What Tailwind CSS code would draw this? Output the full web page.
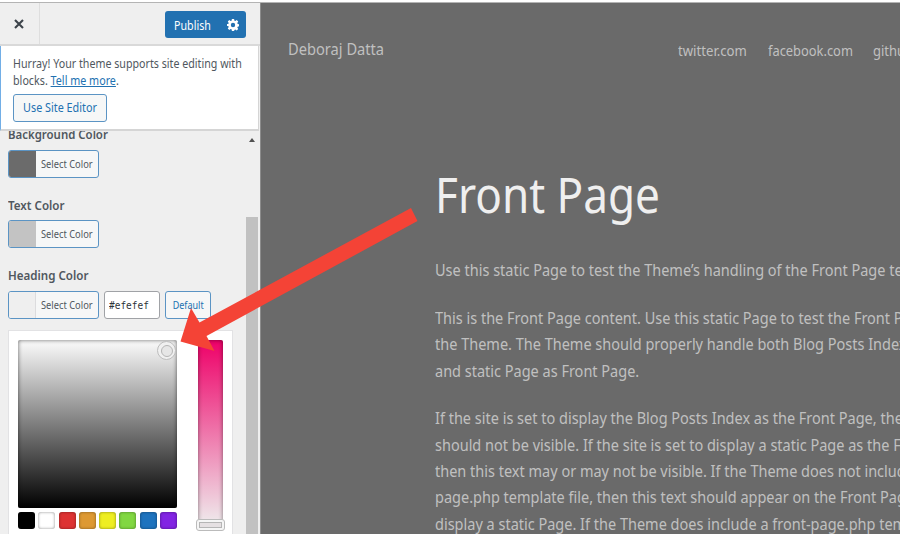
<!DOCTYPE html>
<html lang="en">
<head>
<meta charset="utf-8">
<title>Customize</title>
<script src="https://cdn.jsdelivr.net/npm/@tailwindcss/browser@4"></script>
</head>
<body class="relative flex h-[534px] w-[900px] flex-col overflow-hidden bg-white font-['Noto_Sans',sans-serif]">
<div class="h-[2px] shrink-0 bg-white"></div>
<div class="flex h-[532px] border-t border-[#b4b4b4]">
  <aside class="flex w-[260px] shrink-0 flex-col overflow-hidden bg-[#efefef]">
    <header class="flex h-[43px] shrink-0 items-center border-b-2 border-[#d9d9d9]">
      <button class="flex h-full w-[40px] items-center justify-center border-r border-[#dedede] pr-[2px]">
        <svg class="h-[10px] w-[10px]" viewBox="0 0 10 10" fill="none" stroke="#3c434a" stroke-width="2.1"><path d="M1 1l8 8M9 1l-8 8"/></svg>
      </button>
      <div class="mt-[2px] ml-[125px] flex h-[27px] w-[81px] items-center rounded-[3px] bg-[#2271b1] text-white">
        <span class="w-[54px] pl-[9px] pt-[2px] text-[12px]"><span class="inline-block origin-left scale-x-[.89]">Publish</span></span>
        <svg class="ml-[8px] h-[12px] w-[12px]" viewBox="0 0 22 22"><path fill="#fff" fill-rule="evenodd" d="M9 0h4l.6 3 1.700.7 2.500-1.700 2.800 2.800-1.700 2.500.7 1.700 3 .6v3.800l-3 .6-.7 1.700 1.700 2.500-2.800 2.800-2.500-1.700-1.700.7L13 22H9l-.6-3-1.700-.7L4.200 20l-2.800-2.800 1.700-2.500-.7-1.700-2.400-.1V9.100L2.400 9l.7-1.700L1.400 4.800 4.200 2l2.500 1.700L8.400 3zM11 7a4 4 0 1 0 0 8 4 4 0 0 0 0-8z"/></svg>
      </div>
    </header>
    <section class="flex h-[85px] w-[259px] shrink-0 flex-col items-start border-r border-b-2 border-l border-[#d5d5d5] border-l-[#72aee6] bg-white pt-[10px] pl-[12px] text-[#50575e]">
      <p class="text-[12px] leading-[16.500px] whitespace-nowrap"><span class="block origin-left scale-x-[.89]">Hurray! Your theme supports site editing with</span><span class="block origin-left scale-x-[.895]">blocks. <a class="text-[#2271b1] underline">Tell me more</a>.</span></p>
      <button class="mt-[5px] h-[28px] w-[94px] rounded-[3px] border border-[#5b94c4] bg-[#f6f7f7] text-[12px] whitespace-nowrap text-[#2271b1]"><span class="-mx-2 inline-block scale-x-[.9]">Use Site Editor</span></button>
    </section>
    <div class="flex min-h-0 flex-1 overflow-hidden">
      <div class="w-[246px] pl-[8px] text-[12px] text-[#50575e]">
        <h3 class="-mt-[4px] h-[23px] origin-left scale-x-[.952] leading-[15px] font-semibold">Background Color</h3>
        <button class="flex h-[28px] w-[91px] overflow-hidden rounded-[3px] border border-[#5b94c4] bg-[#f6f7f7] text-[10px] leading-[26px] whitespace-nowrap"><span class="h-full w-[27px] shrink-0 bg-[#6b6b6b]"></span><span class="ml-[5px] origin-left scale-x-[.93]">Select Color</span></button>
        <h3 class="mt-[20px] h-[22px] origin-left scale-x-[.965] leading-[16px] font-semibold">Text Color</h3>
        <button class="flex h-[28px] w-[91px] overflow-hidden rounded-[3px] border border-[#5b94c4] bg-[#f6f7f7] text-[10px] leading-[26px] whitespace-nowrap"><span class="h-full w-[27px] shrink-0 bg-[#c3c3c3]"></span><span class="ml-[5px] origin-left scale-x-[.93]">Select Color</span></button>
        <h3 class="mt-[20px] h-[23px] origin-left scale-x-[.965] leading-[16px] font-semibold">Heading Color</h3>
        <div class="flex">
          <button class="flex h-[28px] w-[91px] overflow-hidden rounded-[3px] border border-[#5b94c4] bg-[#f6f7f7] text-[10px] leading-[26px] whitespace-nowrap"><span class="h-full w-[27px] shrink-0 border-r border-[#dcdcde] bg-[#efefef]"></span><span class="ml-[5px] origin-left scale-x-[.93]">Select Color</span></button>
          <div class="ml-[5px] h-[28px] w-[56px] rounded-[3px] border border-[#a0a2a6] bg-white pl-[4px] font-['DejaVu_Sans_Mono',monospace] text-[10.500px] leading-[26px] text-[#2c3338]"><span class="inline-block origin-left scale-x-[.9]">#efefef</span></div>
          <button class="ml-[5px] h-[28px] w-[46px] rounded-[3px] border border-[#5b94c4] bg-[#f6f7f7] text-[10px] leading-[26px] text-[#2271b1]"><span class="inline-block scale-x-[.9]">Default</span></button>
        </div>
        <div class="mt-[11px] flex h-[220px] w-[225px] border border-[#e2e2e4] bg-white pt-[9px] pl-[9px]">
          <div class="w-[159px]">
            <div class="relative h-[168px] rounded-[2px] bg-linear-to-b/srgb from-[#fcfcfc] to-black shadow-[inset_0_0_4px_rgba(0,0,0,0.6)]">
              <div class="absolute top-[1px] left-[139px] flex h-[19px] w-[19px] items-center justify-center rounded-full border-[1.500px] border-[#bdbdbd] bg-[#f0f0f0]"><div class="h-[12px] w-[12px] rounded-full border border-[#b5b5b5] bg-[#e6e6e6]"></div></div>
            </div>
            <div class="mt-[4px] flex justify-between *:h-[17px] *:w-[17px] *:rounded-[3px] *:shadow-[inset_0_0_3px_rgba(0,0,0,0.45)]">
              <i class="bg-black"></i><i class="bg-white"></i><i class="bg-[#dd3333]"></i><i class="bg-[#dd9933]"></i><i class="bg-[#eeee22]"></i><i class="bg-[#81d742]"></i><i class="bg-[#1e73be]"></i><i class="bg-[#8224e3]"></i>
            </div>
          </div>
          <div class="relative ml-[21px] h-[188px] w-[25px] rounded-[2px] bg-linear-to-b/srgb from-[#ee0068] to-[#efefef] shadow-[inset_0_0_4px_rgba(0,0,0,0.5)]">
            <div class="absolute top-[179px] -left-[2px] h-[12px] w-[29px] rounded-[3px] border border-[#bbb] bg-[#f5f5f5] p-[2px]"><div class="h-full border border-[#b5b5b5] bg-[#e5e0e2]"></div></div>
          </div>
        </div>
      </div>
      <div class="flex w-[12px] flex-col items-center pt-[7px]">
        <svg class="h-[4px] w-[6px]" viewBox="0 0 6 4"><path fill="#505050" d="M0 4L3 0l3 4z"/></svg>
        <div class="mt-[75px] w-[12px] flex-1 bg-[#c1c1c1]"></div>
      </div>
    </div>
  </aside>
  <main class="flex-1 overflow-hidden border-l border-[#8c8c8c] bg-[#6a6a6a] text-[#c0c0c0]">
    <div class="mt-[35px] flex h-[24px] items-center whitespace-nowrap">
      <div class="ml-[27px] w-[390px] shrink-0 text-[15.500px]"><span class="inline-block origin-left scale-x-[.945]">Deboraj Datta</span></div>
      <nav class="flex text-[14px]"><a class="w-[90px] shrink-0"><span class="inline-block origin-left scale-x-[.94]">twitter.com</span></a><a class="w-[105px] shrink-0"><span class="inline-block origin-left scale-x-[.92]">facebook.com</span></a><a><span class="inline-block origin-left scale-x-[.93]">github.com</span></a></nav>
    </div>
    <div class="ml-[174px] w-[620px] whitespace-nowrap">
      <h1 class="mt-[98px] h-[68px] origin-left scale-x-[.9] text-[49px] leading-[68px] text-[#efefef]">Front Page</h1>
      <div class="mt-[29px] origin-left scale-x-[.906] space-y-[21.300px] text-[16px] leading-[26.400px]">
        <p>Use this static Page to test the Theme’s handling of the Front Page template.</p>
        <p>This is the Front Page content. Use this static Page to test the Front Page output of<br>the Theme. The Theme should properly handle both Blog Posts Index as Front Page<br>and static Page as Front Page.</p>
        <p>If the site is set to display the Blog Posts Index as the Front Page, then this text<br>should not be visible. If the site is set to display a static Page as the Front Page,<br>then this text may or may not be visible. If the Theme does not include a front-<br>page.php template file, then this text should appear on the Front Page when set to<br>display a static Page. If the Theme does include a front-page.php template</p>
      </div>
    </div>
  </main>
</div>
<svg class="pointer-events-none absolute inset-0 h-[534px] w-[900px]" viewBox="0 0 900 534"><path fill="#f44336" d="M411 208L417.500 221 206.500 336 214.500 351 180.500 341.500 191 308 199.500 322.500z"/></svg>
</body>
</html>
